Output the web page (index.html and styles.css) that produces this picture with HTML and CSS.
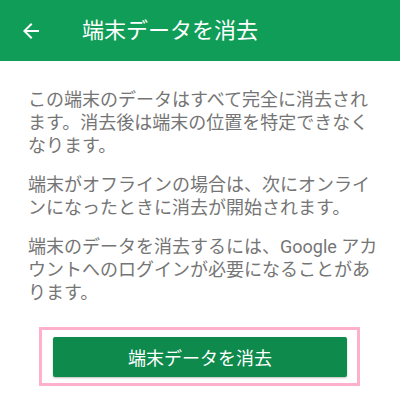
FILE: index.html
```html
<!DOCTYPE html>
<html lang="ja">
<head>
<meta charset="utf-8">
<link rel="stylesheet" href="styles.css">
</head>
<body>
<header class="appbar">
  <svg class="back" width="24" height="24" viewBox="0 0 24 24"><path d="M20 11H7.83l5.59-5.59L12 4l-8 8 8 8 1.41-1.41L7.83 13H20v-2z" fill="#fff"/></svg>
  <h1 class="title">端末データを消去</h1>
</header>
<main class="content">
  <p class="para">この端末のデータはすべて完全に消去されます。消去後は端末の位置を特定できなくなります。</p>
  <p class="para">端末がオフラインの場合は、次にオンラインになったときに消去が開始されます。</p>
  <p class="para">端末のデータを消去するには、Google アカウントへのログインが必要になることがあります。</p>
  <div class="highlight">
    <button class="erase">端末データを消去</button>
  </div>
</main>
</body>
</html>
```
FILE: styles.css
```css
html, body {
  margin: 0;
  padding: 0;
  background: #fff;
}
body {
  font-family: Roboto, "Noto Sans CJK JP", sans-serif;
}
.appbar {
  height: 61px;
  background: #0f9d58;
  display: flex;
  align-items: center;
  padding-left: 19px;
}
.back {
  display: block;
  flex: none;
}
.title {
  margin: 0 0 0 39px;
  font-size: 22px;
  font-weight: 400;
  color: #fff;
  line-height: 28px;
}
.content {
  padding: 27px 20px 0 28px;
}
.para {
  margin: 0 0 16px 0;
  font-size: 18px;
  line-height: 23px;
  color: #757575;
}
.highlight {
  margin: 23px 0 0 11px;
  border: 3px solid #ffb0cc;
  padding: 7px 10px 6px 11px;
  width: 294px;
}
.erase {
  display: block;
  width: 294px;
  height: 40px;
  border: none;
  border-radius: 2px;
  background: #0d8a4c;
  color: #fff;
  font-family: Roboto, "Noto Sans CJK JP", sans-serif;
  font-size: 18px;
  box-shadow: 0 1px 2px rgba(0,0,0,0.25);
  padding: 0;
}
```
